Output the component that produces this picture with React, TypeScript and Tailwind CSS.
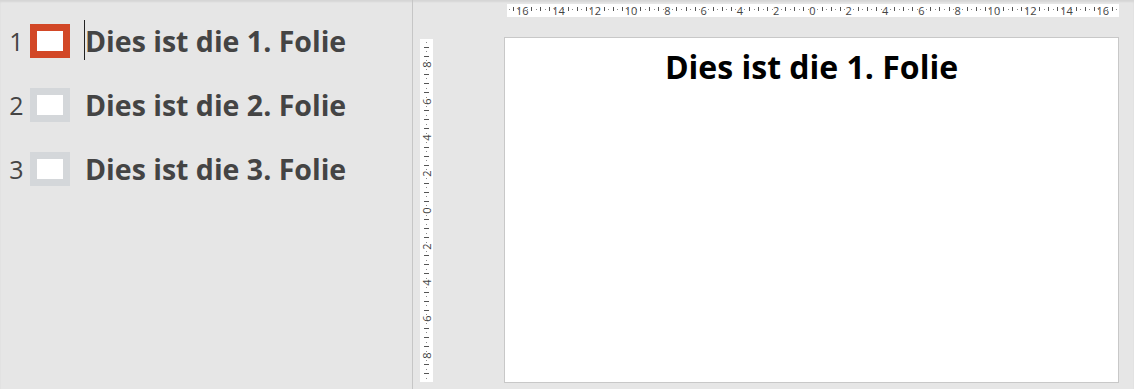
import React from "react";

const PX_PER_CM = 18.14;
const Q = PX_PER_CM / 4;

function HRuler() {
  const W = 612;
  const H = 13;
  const origin = 305.5;
  const ticks: React.ReactNode[] = [];
  const labels: React.ReactNode[] = [];
  for (let k = -67; k <= 67; k++) {
    const x = origin + k * Q;
    if (x < 1 || x > W - 1) continue;
    if (k % 8 === 0) {
      labels.push(
        <span
          key={"t" + k}
          className="absolute top-0 h-[13px] w-[16px] text-center text-[11px] leading-[13px] text-[#444]"
          style={{ left: x - 8 }}
        >
          {Math.abs(k / 4)}
        </span>
      );
    } else if (k % 2 !== 0) {
      ticks.push(<rect key={"d" + k} x={Math.round(x)} y={5} width={1} height={1} fill="#8a8a8a" />);
    } else {
      ticks.push(<rect key={"l" + k} x={Math.round(x)} y={3} width={1} height={4} fill="#555" />);
    }
  }
  return (
    <div className="relative w-[612px] h-[13px] bg-white">
      <svg width={W} height={H} className="absolute left-0 top-0">
        {ticks}
      </svg>
      {labels}
    </div>
  );
}

function VRuler() {
  const W = 13;
  const H = 343;
  const origin = 171;
  const ticks: React.ReactNode[] = [];
  const labels: React.ReactNode[] = [];
  for (let k = -38; k <= 38; k++) {
    const y = origin + k * Q;
    if (y < 1 || y > H - 1) continue;
    if (k % 8 === 0) {
      labels.push(
        <span
          key={"t" + k}
          className="absolute left-0 w-[13px] h-[13px] text-center text-[11px] leading-[13px] text-[#444] -rotate-90"
          style={{ top: y - 6.5 }}
        >
          {Math.abs(k / 4)}
        </span>
      );
    } else if (k % 2 !== 0) {
      ticks.push(<rect key={"d" + k} x={6} y={Math.round(y)} width={1} height={1} fill="#8a8a8a" />);
    } else {
      ticks.push(<rect key={"l" + k} x={4} y={Math.round(y)} width={5} height={1} fill="#555" />);
    }
  }
  return (
    <div className="relative w-[13px] h-[343px] bg-white">
      <svg width={W} height={H} className="absolute left-0 top-0">
        {ticks}
      </svg>
      {labels}
    </div>
  );
}

function SlideRow({ n, active }: { n: number; active: boolean }) {
  return (
    <div className="flex items-center h-[34px]">
      <div className="w-[23px] ml-[5px] text-center text-[25px] leading-none text-[#444]">{n}</div>
      <div
        className={
          "ml-[2px] w-[40px] h-[34px] border-[7px] bg-white " +
          (active ? "border-[#d24726]" : "border-[#d4d7da]")
        }
      />
      <div className="relative ml-[14px] pl-[1px]">
        {active && <div className="absolute left-0 top-[-7px] w-px h-[40px] bg-[#222]" />}
        <div className="text-[28.5px] leading-[28px] font-bold text-[#444] whitespace-nowrap">
          Dies ist die {n}. Folie
        </div>
      </div>
    </div>
  );
}

export default function App() {
  return (
    <div className="w-[1134px] h-[389px] bg-[#e6e6e6] flex overflow-hidden font-['Open_Sans',sans-serif] shadow-[inset_0_2px_2px_rgba(0,0,0,0.07)]">
      <div className="w-[413px] shrink-0 border-r border-[#c6c6c6] pt-[24px] flex flex-col gap-[30px]">
        <SlideRow n={1} active />
        <SlideRow n={2} active={false} />
        <SlideRow n={3} active={false} />
      </div>
      <div className="flex">
        <div className="ml-[7px] mt-[39px]">
          <VRuler />
        </div>
        <div className="ml-[71px] flex flex-col">
          <div className="mt-[4px] ml-[3px]">
            <HRuler />
          </div>
          <div className="mt-[20px] w-[615px] h-[346px] bg-white border border-[#c8c8c8] flex flex-col items-center">
            <div className="pt-[13px] text-[32px] leading-[32px] font-bold text-black whitespace-nowrap">
              Dies ist die 1. Folie
            </div>
          </div>
        </div>
      </div>
    </div>
  );
}
